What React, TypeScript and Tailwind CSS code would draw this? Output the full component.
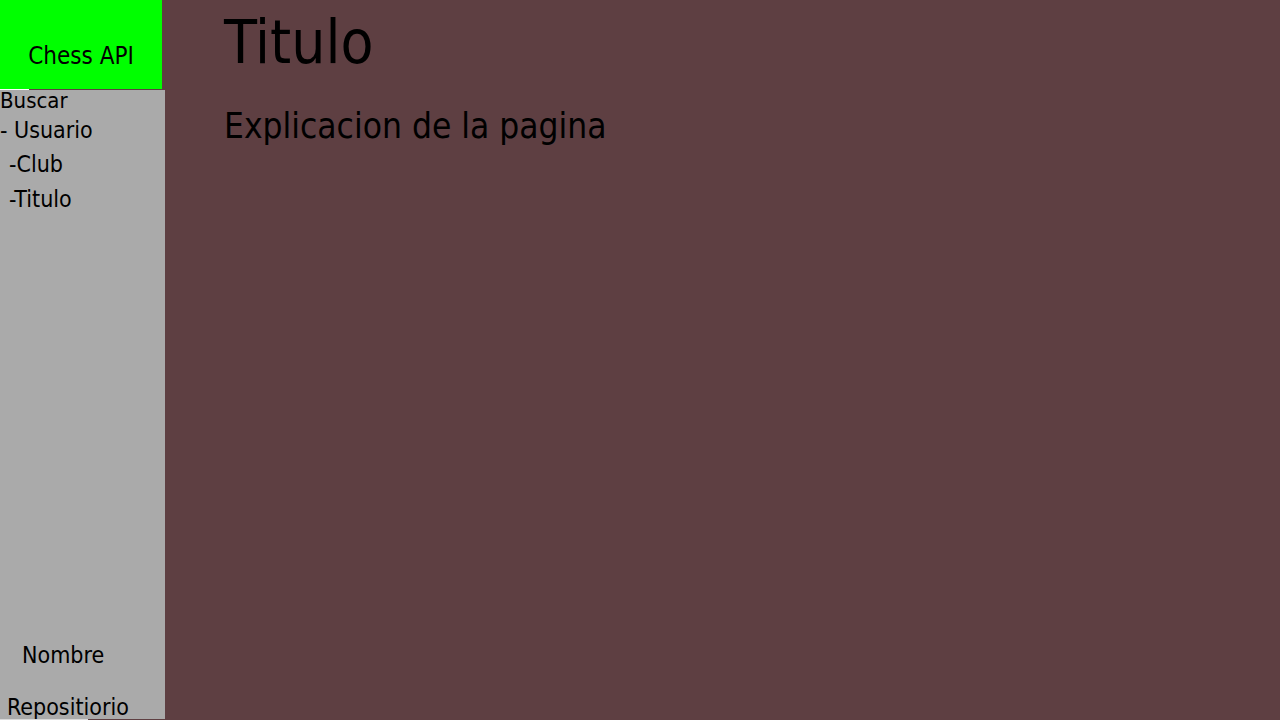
export default function App() {
  return (
    <div
      className="flex w-[1280px] h-[720px] bg-[#5e3f42] text-black overflow-hidden"
      style={{ fontFamily: '"DejaVu Sans Condensed", "DejaVu Sans", sans-serif' }}
    >
      <aside className="flex flex-col w-[165px] shrink-0">
        <div className="w-[162px] h-[89px] bg-[#00ff00] flex items-end justify-center pb-[21px] text-[24px] leading-none">
          Chess API
        </div>
        <div className="flex h-px">
          <div className="w-[29px] bg-white" />
        </div>
        <nav className="flex flex-col flex-1 bg-[#aaaaaa] text-[23px] leading-none">
          <div className="text-[22px]">Buscar</div>
          <div className="mt-[7px]">- Usuario</div>
          <div className="mt-[11px] pl-[9px]">-Club</div>
          <div className="mt-[12px] pl-[9px]">-Titulo</div>
          <div className="mt-auto pl-[22px]">Nombre</div>
          <div className="mt-[29px] pl-[7px]">Repositiorio</div>
        </nav>
        <div className="flex h-px">
          <div className="w-[88px] bg-[#d8d8d8]" />
        </div>
      </aside>
      <main className="flex-1 pl-[59px]">
        <h1 className="text-[60px] leading-none pt-[12px]">Titulo</h1>
        <p className="text-[35px] leading-none mt-[37px]">Explicacion de la pagina</p>
      </main>
    </div>
  );
}
